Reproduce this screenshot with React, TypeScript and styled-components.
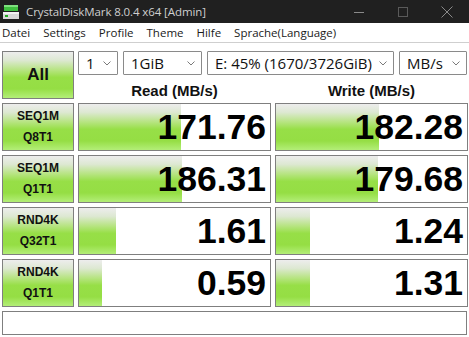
import React from "react";
import styled, { createGlobalStyle } from "styled-components";

const Global = createGlobalStyle`
  html, body { margin: 0; padding: 0; background: #ffffff; }
  body { width: 469px; height: 337px; overflow: hidden; }
`;

const green = `linear-gradient(to bottom, #ededed 0%, #dde8d2 18%, #b5e47e 40%, #97df47 55%, #95de44 80%, #b3ee78 100%)`;

const Window = styled.div`
  width: 469px;
  height: 337px;
  display: flex;
  flex-direction: column;
  background: #ffffff;
  font-family: "Open Sans", "Noto Sans", sans-serif;
`;

const TitleBar = styled.div`
  height: 23px;
  background: #202020;
  display: flex;
  align-items: center;
  padding-left: 2px;
`;

const Title = styled.span`
  margin-left: 6px;
  color: #cfcfcf;
  font-size: 11.5px;
  letter-spacing: -0.1px;
`;

const Controls = styled.div`
  margin-left: auto;
  display: flex;
  height: 100%;
`;

const CtrlBtn = styled.div`
  width: 44px;
  height: 100%;
  display: flex;
  align-items: center;
  justify-content: center;
`;

const MenuBar = styled.div`
  height: 19px;
  border-bottom: 1px solid #cfcfcf;
  display: flex;
  align-items: center;
  padding-left: 2px;
`;

const MenuItem = styled.span`
  font-size: 11.5px;
  color: #1a1a1a;
  margin-right: 13px;
`;

const Main = styled.div`
  padding: 8px 2px 0 2px;
  display: flex;
  flex-direction: column;
  gap: 4px;
`;

const Grid = styled.div`
  display: grid;
  grid-template-columns: 72px 193px 193px;
  grid-auto-rows: 48px;
  column-gap: 4px;
  row-gap: 4px;
`;

const GreenButton = styled.div`
  box-sizing: border-box;
  border: 1px solid #7f7f7f;
  background: ${green};
  display: flex;
  flex-direction: column;
  align-items: center;
  justify-content: center;
  font-family: "Liberation Sans", Arial, sans-serif;
  font-weight: bold;
  color: #111;
`;

const AllButton = styled(GreenButton)`
  font-size: 17px;
`;

const LabelButton = styled(GreenButton)`
  font-size: 12px;
  line-height: 21px;
`;

const TopRight = styled.div`
  grid-column: 2 / span 2;
  display: grid;
  grid-template-columns: 193px 193px;
  grid-template-rows: 24px 24px;
  column-gap: 4px;
`;

const SelectRow = styled.div`
  grid-column: 1 / span 2;
  display: flex;
  gap: 5px;
`;

const Select = styled.div<{ $w: number }>`
  box-sizing: border-box;
  width: ${(p) => p.$w}px;
  height: 24px;
  border: 1px solid #8a8a8a;
  border-radius: 1px;
  background: #fff;
  display: flex;
  align-items: center;
  padding-left: 7px;
  padding-right: 6px;
  font-size: 15px;
  color: #111;
  overflow: hidden;
  white-space: nowrap;
`;

const SelectText = styled.span`
  flex: 1;
  overflow: hidden;
`;

const Header = styled.div`
  align-self: end;
  text-align: center;
  font-family: "Liberation Sans", Arial, sans-serif;
  font-weight: bold;
  font-size: 15px;
  line-height: 16px;
  color: #111;
`;

const Cell = styled.div<{ $fill: number }>`
  box-sizing: border-box;
  border: 1px solid #7f7f7f;
  background: ${green} no-repeat left top / ${(p) => p.$fill}px 100%, #ffffff;
  display: flex;
  align-items: center;
  justify-content: flex-end;
  padding-right: 4px;
  font-family: "Liberation Sans", Arial, sans-serif;
  font-weight: bold;
  font-size: 35.5px;
  color: #000;
`;

const StatusBar = styled.div`
  box-sizing: border-box;
  width: 465px;
  height: 24px;
  border: 1px solid #7f7f7f;
  background: #fff;
`;

const Chevron = () => (
  <svg width="8" height="5" viewBox="0 0 8 5">
    <path d="M0.5 0.5 L4 4 L7.5 0.5" fill="none" stroke="#7a7a7a" strokeWidth="1" />
  </svg>
);

const AppIcon = () => (
  <svg width="18" height="18" viewBox="0 0 18 18">
    <rect x="2" y="2" width="14" height="6" fill="#3fbf3f" />
    <rect x="2" y="2" width="14" height="2" fill="#7fe07f" />
    <rect x="1" y="9" width="16" height="7" fill="#d8d8d8" />
    <rect x="1" y="9" width="16" height="2" fill="#f2f2f2" />
    <rect x="3" y="12" width="3" height="2" fill="#22aa22" />
  </svg>
);

const rows = [
  { l1: "SEQ1M", l2: "Q8T1", r: "171.76", rf: 102, w: "182.28", wf: 103 },
  { l1: "SEQ1M", l2: "Q1T1", r: "186.31", rf: 103, w: "179.68", wf: 102 },
  { l1: "RND4K", l2: "Q32T1", r: "1.61", rf: 37, w: "1.24", wf: 34 },
  { l1: "RND4K", l2: "Q1T1", r: "0.59", rf: 23, w: "1.31", wf: 34 },
];

const menus = ["Datei", "Settings", "Profile", "Theme", "Hilfe", "Sprache(Language)"];

export default function App() {
  return (
    <>
      <Global />
      <Window>
        <TitleBar>
          <AppIcon />
          <Title>CrystalDiskMark 8.0.4 x64 [Admin]</Title>
          <Controls>
            <CtrlBtn>
              <svg width="12" height="12" viewBox="0 0 12 12">
                <path d="M1 6.5 H11" stroke="#8a8a8a" strokeWidth="1" />
              </svg>
            </CtrlBtn>
            <CtrlBtn>
              <svg width="12" height="12" viewBox="0 0 12 12">
                <rect x="1.5" y="1.5" width="9" height="9" fill="none" stroke="#5a5a5a" strokeWidth="1" />
              </svg>
            </CtrlBtn>
            <CtrlBtn>
              <svg width="12" height="12" viewBox="0 0 12 12">
                <path d="M0.5 0.5 L11.5 11.5 M11.5 0.5 L0.5 11.5" stroke="#8a8a8a" strokeWidth="1" />
              </svg>
            </CtrlBtn>
          </Controls>
        </TitleBar>
        <MenuBar>
          {menus.map((m) => (
            <MenuItem key={m}>{m}</MenuItem>
          ))}
        </MenuBar>
        <Main>
          <Grid>
            <AllButton>All</AllButton>
            <TopRight>
              <SelectRow>
                <Select $w={40}><SelectText>1</SelectText><Chevron /></Select>
                <Select $w={79}><SelectText>1GiB</SelectText><Chevron /></Select>
                <Select $w={187}><SelectText>E: 45% (1670/3726GiB)</SelectText><Chevron /></Select>
                <Select $w={68}><SelectText>MB/s</SelectText><Chevron /></Select>
              </SelectRow>
              <Header>Read (MB/s)</Header>
              <Header>Write (MB/s)</Header>
            </TopRight>
            {rows.map((r) => (
              <React.Fragment key={r.l1 + r.l2}>
                <LabelButton>
                  <span>{r.l1}</span>
                  <span>{r.l2}</span>
                </LabelButton>
                <Cell $fill={r.rf}>{r.r}</Cell>
                <Cell $fill={r.wf}>{r.w}</Cell>
              </React.Fragment>
            ))}
          </Grid>
          <StatusBar />
        </Main>
      </Window>
    </>
  );
}
